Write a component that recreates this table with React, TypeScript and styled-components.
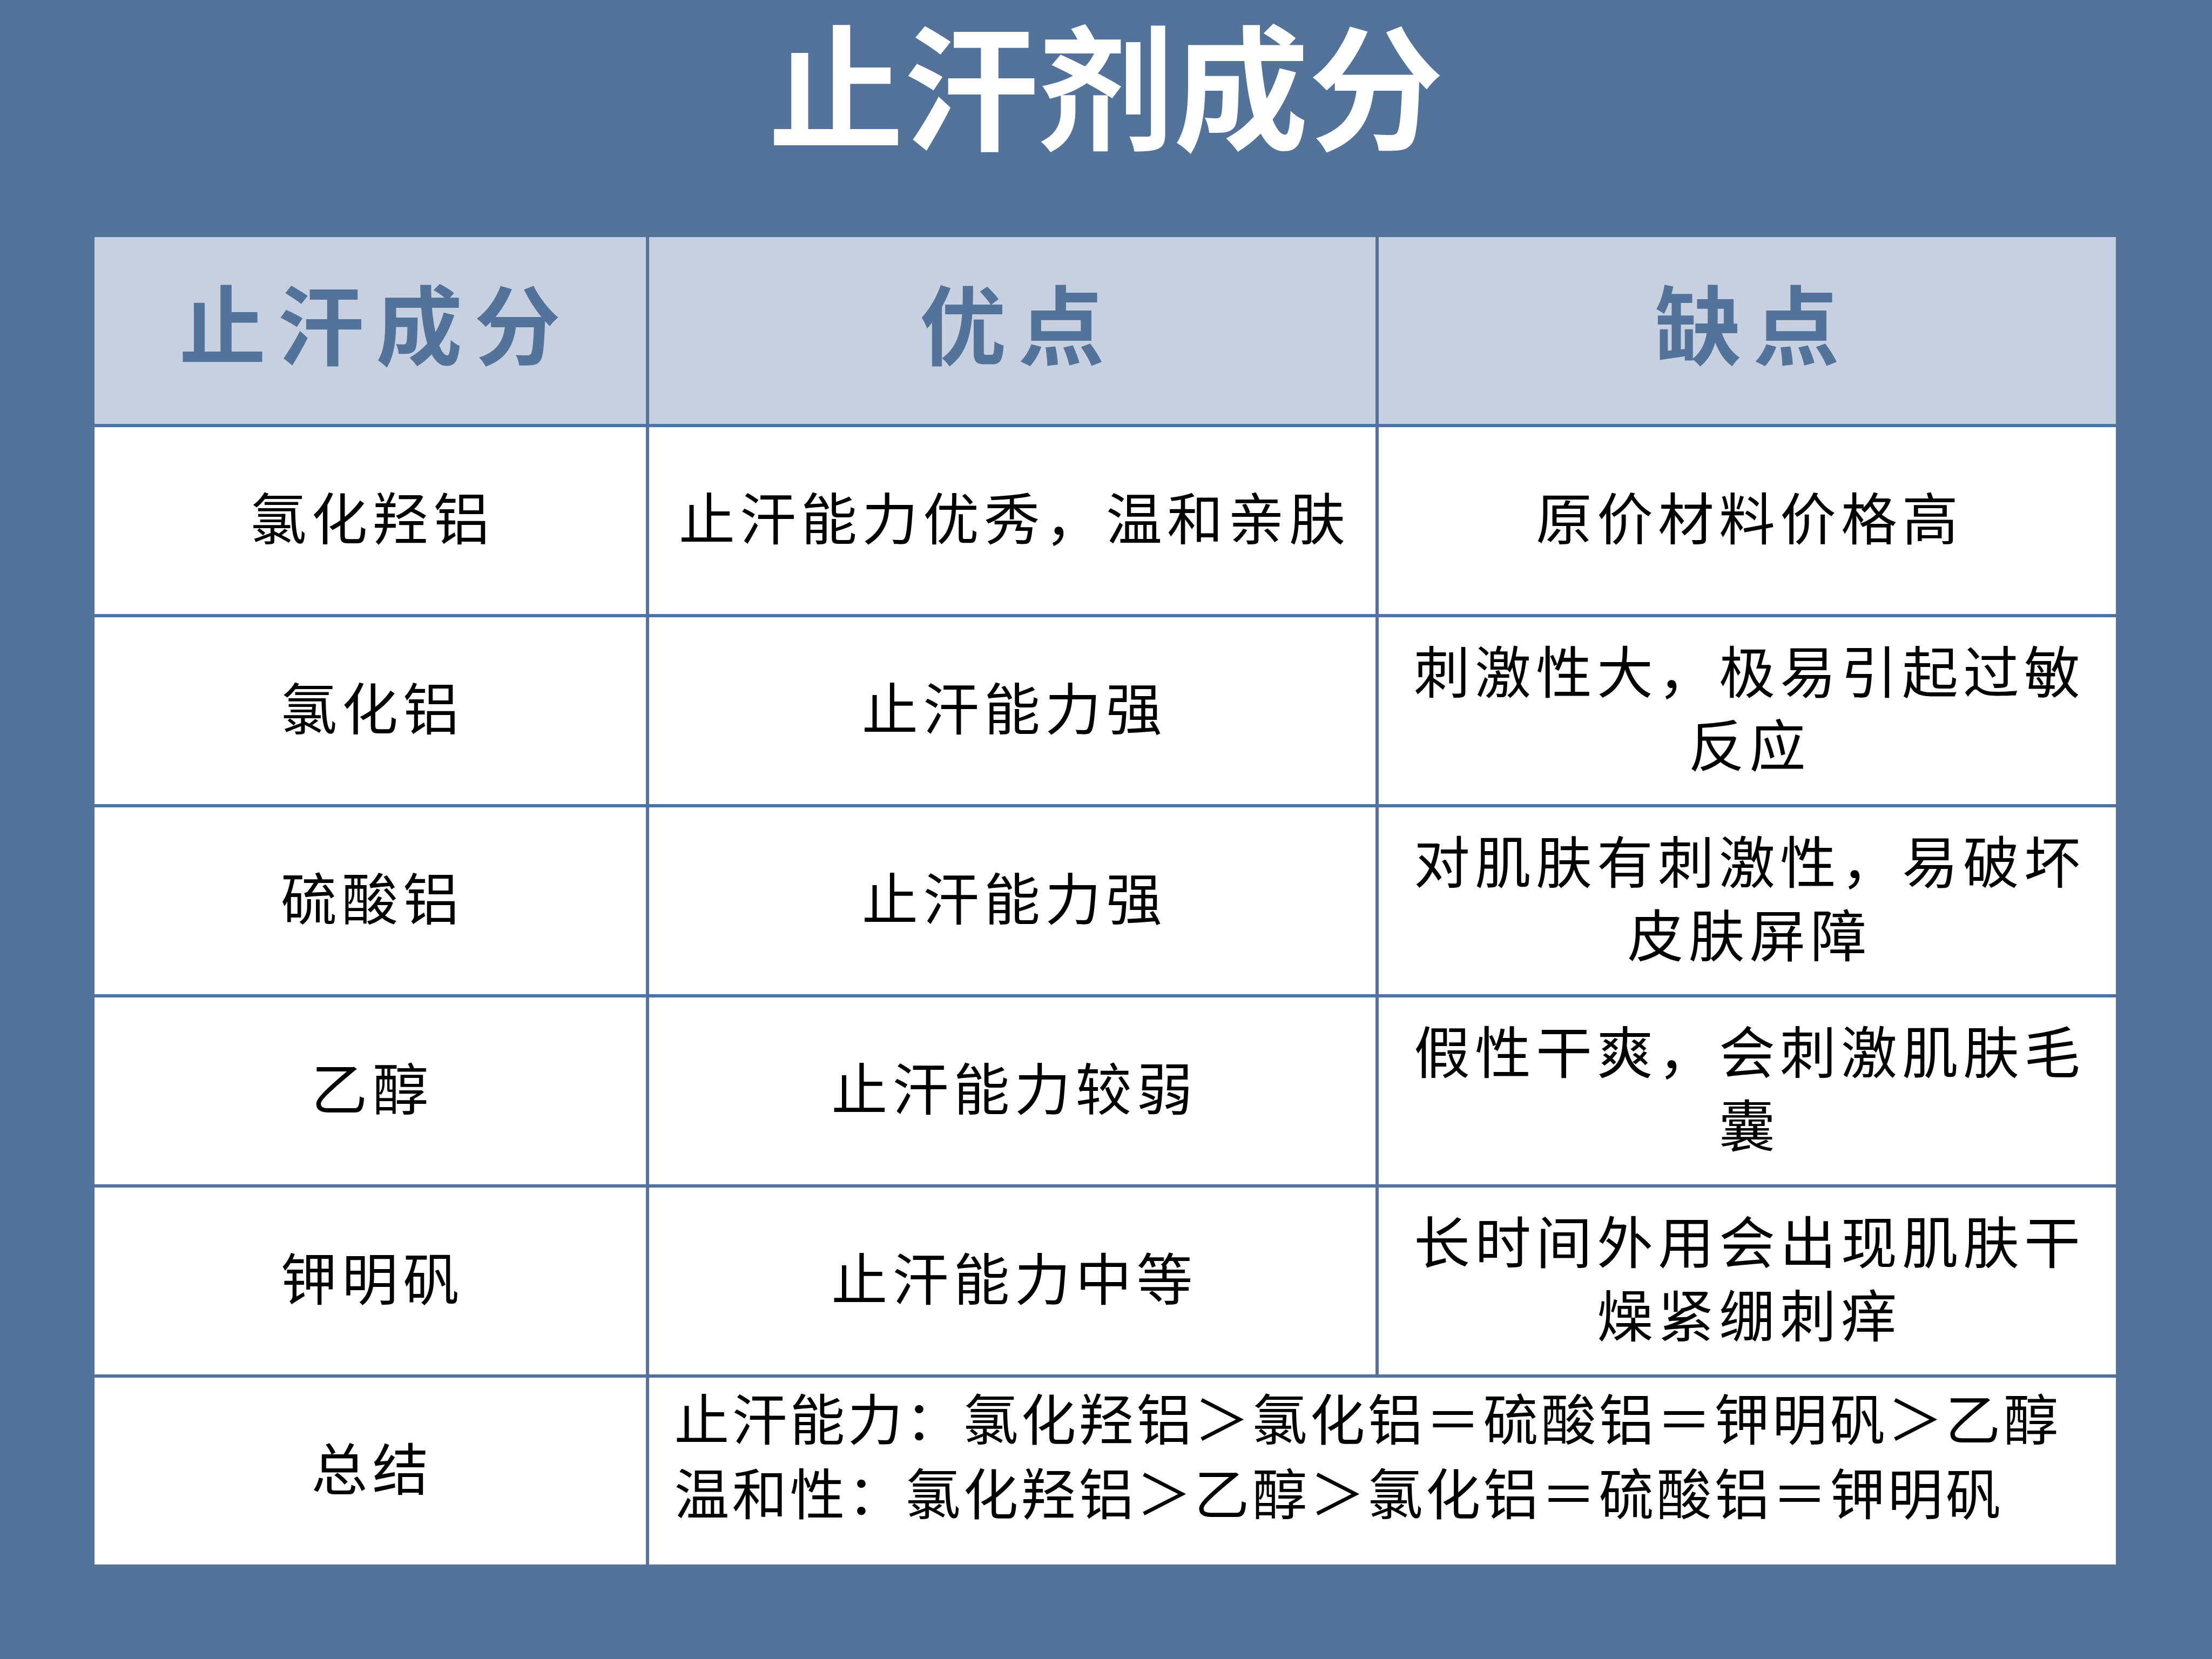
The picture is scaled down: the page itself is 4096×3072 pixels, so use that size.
import styled, { createGlobalStyle } from "styled-components";

const BLUE = "#54739a";
const HEAD_BG = "#c7d0e1";

const GlobalStyle = createGlobalStyle`
    html, body {
        margin: 0;
        padding: 0;
        background: ${BLUE};
    }
`;

type Row = { name: string; pro: string; con: string };

const ROWS: Row[] = [
    { name: "氯化羟铝", pro: "止汗能力优秀，温和亲肤", con: "原价材料价格高" },
    { name: "氯化铝", pro: "止汗能力强", con: "刺激性大，极易引起过敏反应" },
    { name: "硫酸铝", pro: "止汗能力强", con: "对肌肤有刺激性，易破坏皮肤屏障" },
    { name: "乙醇", pro: "止汗能力较弱", con: "假性干爽，会刺激肌肤毛囊" },
    { name: "钾明矾", pro: "止汗能力中等", con: "长时间外用会出现肌肤干燥紧绷刺痒" },
];

const App = () => {
    return (
        <Page>
            <GlobalStyle />
            <Title>止汗剂成分</Title>
            <Table>
                <HeadCell>止汗成分</HeadCell>
                <HeadCell>优点</HeadCell>
                <HeadCell>缺点</HeadCell>
                {ROWS.map((row) => [
                    <Cell key={row.name + "-n"}>{row.name}</Cell>,
                    <Cell key={row.name + "-p"}>{row.pro}</Cell>,
                    <Cell key={row.name + "-c"}>{row.con}</Cell>,
                ])}
                <Cell>总结</Cell>
                <SummaryCell>
                    <div>止汗能力：氯化羟铝＞氯化铝＝硫酸铝＝钾明矾＞乙醇</div>
                    <div>温和性：氯化羟铝＞乙醇＞氯化铝＝硫酸铝＝钾明矾</div>
                </SummaryCell>
            </Table>
        </Page>
    );
};

const Page = styled.main`
    width: 4096px;
    height: 3072px;
    background: ${BLUE};
    display: flex;
    flex-direction: column;
    align-items: center;
    font-family: "Noto Sans CJK SC", "Noto Sans", sans-serif;
    overflow: hidden;
`;
const Title = styled.h1`
    margin: 0;
    height: 439px;
    box-sizing: border-box;
    padding-top: 0;
    font-size: 250px;
    line-height: 1.2;
    font-weight: 700;
    color: #ffffff;
`;
const Table = styled.section`
    width: 3743px;
    display: grid;
    grid-template-columns: 1021px 1345px 1365px;
    grid-auto-rows: 346px;
    gap: 6px;
    background: ${BLUE};
    margin-left: -4px;
`;
const HeadCell = styled.div`
    background: ${HEAD_BG};
    color: ${BLUE};
    display: flex;
    align-items: center;
    justify-content: center;
    box-sizing: border-box;
    padding-bottom: 36px;
    font-size: 160px;
    font-weight: 700;
    letter-spacing: 22px;
    text-indent: 22px;
`;
const Cell = styled.div`
    background: #ffffff;
    color: #000000;
    display: flex;
    align-items: center;
    justify-content: center;
    text-align: center;
    box-sizing: border-box;
    padding: 0 40px 18px 49px;
    font-size: 104px;
    line-height: 136px;
    letter-spacing: 9px;
`;
const SummaryCell = styled.div`
    grid-column: 2 / 4;
    background: #ffffff;
    color: #000000;
    display: flex;
    flex-direction: column;
    justify-content: center;
    box-sizing: border-box;
    padding: 0 20px 64px 47px;
    font-size: 102px;
    line-height: 138px;
    letter-spacing: 5px;
    white-space: nowrap;
`;

export default App;
